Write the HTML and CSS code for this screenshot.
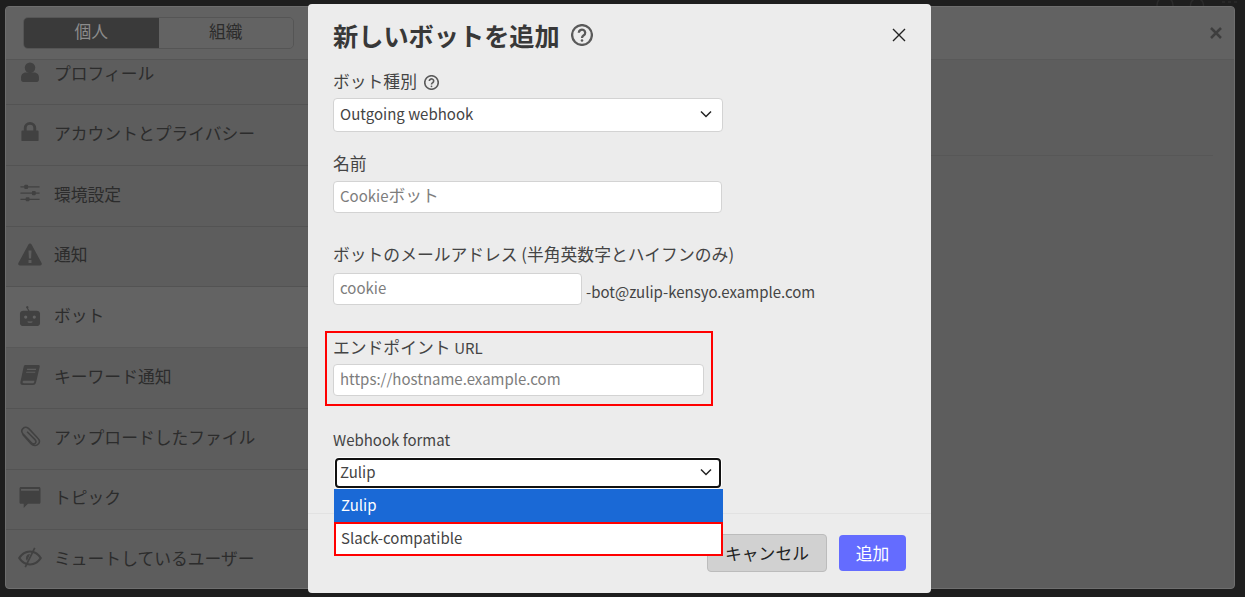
FILE: index.html
```html
<!DOCTYPE html>
<html lang="ja">
<head>
<meta charset="utf-8">
<title>新しいボットを追加</title>
<link rel="stylesheet" href="styles.css">
</head>
<body>
<div class="backdrop">
  <svg class="bd-icons" viewBox="0 0 90 12"><circle cx="9" cy="9" r="8"/><circle cx="41" cy="9" r="6.500"/><path d="M66 2h18M66 6h18" stroke-dasharray="3 3"/></svg>
</div>
<div class="settings">
  <aside class="sidebar">
    <div class="tabs-row">
      <div class="tabs"><span class="tab tab-on">個人</span><span class="tab">組織</span></div>
    </div>
    <ul class="menu">
      <li class="row row-first"><svg class="ico" viewBox="0 0 20 20"><circle cx="10" cy="5.500" r="5"/><path d="M1.500 17v-2.500C1.500 11.500 4 10 6 10h8c2 0 4.500 1.500 4.500 4.500V17c0 1-.8 2-2 2h-13c-1.200 0-2-1-2-2z"/></svg><span>プロフィール</span></li>
      <li class="row"><svg class="ico" viewBox="-1 0 22 22"><path fill-rule="evenodd" d="M2 9h1.500V6.500a6.500 6.500 0 0 1 13 0V9H18c.6 0 1 .4 1 1v9c0 .6-.4 1-1 1H2c-.6 0-1-.4-1-1v-9c0-.6.4-1 1-1zm4.500 0h7V6.500a3.500 3.500 0 0 0-7 0z"/></svg><span>アカウントとプライバシー</span></li>
      <li class="row"><svg class="ico" viewBox="-1 -1 24 22"><path d="M1 2.500h20v1.200H1zM1 9h20v1.200H1zM1 15.500h20v1.200H1z"/><rect x="5" y="0.800" width="4" height="4.400" rx="1"/><rect x="13" y="7.400" width="4" height="4.400" rx="1"/><rect x="6.500" y="13.800" width="4" height="4.400" rx="1"/></svg><span>環境設定</span></li>
      <li class="row"><svg class="ico ico-tall" viewBox="0 0 24 22"><path fill-rule="evenodd" d="M12 0c.7 0 1.200.4 1.600 1l10 18.500c.6 1.200-.2 2.500-1.500 2.500H1.900C.6 22-.2 20.700.4 19.500L10.400 1c.4-.6.900-1 1.600-1zM10.500 7l.4 8h2.200l.4-8zm0 9.500v3h3v-3z"/></svg><span>通知</span></li>
      <li class="row row-on"><svg class="ico" viewBox="0 0 22 22"><path fill-rule="evenodd" d="M8 1a1.400 1.400 0 0 1 1 2.400L10.500 6H18c2 0 3.500 1.300 3.500 3v10c0 1.700-1.500 3-3.500 3H4c-2 0-3.500-1.300-3.500-3V9c0-1.700 1.500-3 3.500-3h5L7.800 3.700A1.400 1.400 0 0 1 8 1zM6.500 11a1.700 1.700 0 1 0 0 3.400 1.700 1.700 0 0 0 0-3.400zm9 0a1.700 1.700 0 1 0 0 3.400 1.700 1.700 0 0 0 0-3.400zM8.500 17v1c1.500.7 3.500.7 5 0v-1c-1.500.5-3.500.5-5 0z"/></svg><span>ボット</span></li>
      <li class="row"><svg class="ico" viewBox="0 0 22 22"><path fill-rule="evenodd" d="M6 0h14c1 0 1.500.8 1.200 1.800l-3.500 15c-.6 2.500-1.200 4.200-3.700 4.200H3.500C1.500 21 .5 19.500 1 17.500L4.300 2C4.600.8 5 0 6 0zm2 4l-.3 1.200h9.500L17.500 4zm-.8 3l-.3 1.200h9.500l.3-1.200zM4.500 16.500c-1.500 0-1.800 2.600 0 2.600h9.700c.6 0 1-.6 1.200-1.300l.3-1.300z"/></svg><span>キーワード通知</span></li>
      <li class="row"><svg class="ico ico-clip" viewBox="0 0 22 22"><path d="M3 8.500 L12 18.500 C14.500 21 18 21 19.500 19 C21.500 17 21 14.500 19 12.500 L10 3 C8 .8 5.500 .8 3.800 2.500 C2 4.200 2 6.500 3.800 8.500 L12.500 17.500 C14 19 15.500 19 16.500 18 C17.500 17 17.500 15.500 16 14 L8 6"/></svg><span>アップロードしたファイル</span></li>
      <li class="row"><svg class="ico" viewBox="0 0 20 20"><path fill-rule="evenodd" d="M1.500 0h17C19.400 0 20 .6 20 1.500v13c0 .9-.6 1.500-1.500 1.500H8l-4 4v-4H1.500C.6 16 0 15.400 0 14.500v-13C0 .6.6 0 1.500 0zM1.500 2v1.600h17V2z"/></svg><span>トピック</span></li>
      <li class="row"><svg class="ico ico-tall" viewBox="0 0 24 22"><path fill-rule="evenodd" d="M12 3c5 0 9.500 3 12 7.500-2.500 4.500-7 7.500-12 7.500S2.500 15 0 10.500C2.500 6 7 3 12 3zm0 2C8.200 5 4.800 7.200 2.500 10.500 4.800 13.800 8.200 16 12 16s7.200-2.200 9.500-5.500C19.200 7.200 15.800 5 12 5z"/><path d="M16 0l1.500.8L8 20l-1.500-.8z"/><path d="M12 6.500a4 4 0 0 0-3 6.700z"/></svg><span>ミュートしているユーザー</span></li>
    </ul>
  </aside>
  <main class="pane">
    <header class="pane-head"><svg class="pane-close" viewBox="0 0 12 12"><path d="M1 1l10 10M11 1L1 11"/></svg></header>
    <div class="pane-body"><div class="pane-rule"></div></div>
  </main>
</div>

<section class="modal">
  <header class="modal-head">
    <h1>新しいボットを追加</h1>
    <svg class="help help-lg" viewBox="0 0 24 24"><circle cx="12" cy="12" r="10.800"/><path d="M8.500 9.500a3.500 3.300 0 1 1 5.400 2.800c-1.300.9-1.900 1.500-1.900 2.900"/><circle class="dot" cx="12" cy="18" r="1.400"/></svg>
    <svg class="close" viewBox="0 0 14 14"><path d="M1 1l12 12M13 1L1 13"/></svg>
  </header>

  <div class="field field-type">
    <label class="lbl">ボット種別 <svg class="help help-sm" viewBox="0 0 24 24"><circle cx="12" cy="12" r="10.800"/><path d="M8.500 9.500a3.500 3.300 0 1 1 5.400 2.800c-1.300.9-1.900 1.500-1.900 2.900"/><circle class="dot" cx="12" cy="18" r="1.400"/></svg></label>
    <div class="box select w390">Outgoing webhook<svg class="chev" viewBox="0 0 12 8"><path d="M1 1.500l5 5 5-5"/></svg></div>
  </div>

  <div class="field field-name">
    <label class="lbl">名前</label>
    <div class="box input w389">Cookie<span class="jp">ボット</span></div>
  </div>

  <div class="field field-mail">
    <label class="lbl">ボットのメールアドレス (半角英数字とハイフンのみ)</label>
    <div class="mail-row">
      <div class="box input w249">cookie</div>
      <span class="suffix">-bot@zulip-kensyo.example.com</span>
    </div>
  </div>

  <div class="field-url">
    <label class="lbl">エンドポイント <span class="latin">URL</span></label>
    <div class="box input w371">https://hostname.example.com</div>
  </div>

  <div class="field field-format">
    <label class="lbl lbl-small">Webhook format</label>
    <div class="box select focus">Zulip<svg class="chev" viewBox="0 0 12 8"><path d="M1 1.500l5 5 5-5"/></svg></div>
  </div>

  <footer class="modal-foot">
    <button class="btn btn-cancel">キャンセル</button>
    <button class="btn btn-add">追加</button>
  </footer>

  <ul class="dropdown">
    <li class="opt opt-on">Zulip</li>
    <li class="opt opt-mark">Slack-compatible</li>
  </ul>
</section>
</body>
</html>
```

FILE: styles.css
```css
* { box-sizing: border-box; }
html, body { height: 100%; }
body {
  margin: 0;
  height: 597px;
  overflow: hidden;
  background: #1e1e1e;
  font-family: "Noto Sans CJK JP", "Noto Sans", sans-serif;
  font-size: 16.8px;
  color: #333;
  padding: 6px 10px 8px 5px;
}
.backdrop {
  position: absolute;
  z-index: -1;
  left: 0;
  right: 0;
  top: 0;
  height: 6px;
  overflow: hidden;
}
.bd-icons {
  position: absolute;
  left: 1156px;
  top: -4px;
  width: 90px;
  height: 12px;
  fill: none;
  stroke: #2b2b2b;
  stroke-width: 1.500;
}
.settings {
  display: flex;
  height: 583px;
  background: #5d5d5d;
  border: 1px solid #6e6e6e;
  border-radius: 4px;
  overflow: hidden;
}
.sidebar { width: 320px; flex: none; }
.tabs-row {
  height: 53px;
  padding: 10px 32px 10px 17px;
  background: #626262;
  border-bottom: 1px solid #555;
}
.tabs {
  display: flex;
  height: 32px;
  border: 1px solid #555;
  border-radius: 5px;
  overflow: hidden;
}
.tab {
  flex: 1;
  text-align: center;
  line-height: 27px;
  color: #2b2b2b;
  background: #636363;
}
.tab-on { background: #3a3a3a; color: #8c8c8c; }
.menu { list-style: none; margin: 0; padding: 0; }
.row {
  display: flex;
  align-items: center;
  gap: 12px;
  height: 60.75px;
  padding: 0 0 4px 12px;
  border-bottom: 1px solid #535353;
  color: #2c2c2c;
  line-height: 24px;
}
.row-first { height: 45px; padding-bottom: 19px; }
.row-on { background: #636363; border-bottom-color: #585858; }
.ico { width: 24px; height: 21px; fill: #414141; flex: none; }
.ico-tall { height: 23px; }
.ico-clip { fill: none; stroke: #414141; stroke-width: 1.600; }
.pane { flex: 1; display: flex; flex-direction: column; }
.pane-head {
  height: 53px;
  background: #626262;
  border-bottom: 1px solid #595959;
  display: flex;
  justify-content: flex-end;
  align-items: center;
  padding-right: 12px;
}
.pane-close { width: 12px; height: 12px; fill: none; stroke: #3e3e3e; stroke-width: 2.500; }
.pane-body { flex: 1; padding: 95px 21px 0 0; }
.pane-rule { height: 1px; background: #575757; }

.modal {
  position: absolute;
  left: 308px;
  top: 4px;
  width: 623px;
  height: 589px;
  background: #ececec;
  border-radius: 4px;
  padding: 0 25px;
}
.modal-head {
  display: flex;
  align-items: center;
  height: 66px;
  padding-bottom: 4px;
}
.modal-head h1 {
  margin: 0;
  font-size: 25.200px;
  font-weight: 700;
  line-height: 36px;
  color: #383838;
}
.help { fill: none; stroke: #5a5a5a; stroke-width: 2.500; }
.help .dot { fill: #5a5a5a; stroke: none; }
.help-lg { width: 22px; height: 22px; margin-left: 11px; }
.help-sm { width: 15px; height: 15px; vertical-align: -2px; margin-left: 3px; stroke-width: 2.600; }
.close { width: 14px; height: 14px; margin-left: auto; fill: none; stroke: #222; stroke-width: 1.400; }
.lbl { display: block; height: 24px; line-height: 22px; color: #444; }
.lbl-small { font-size: 15px; line-height: 24px; }
.latin { font-size: 15px; }
.jp { font-size: 16.800px; }
.field-type .lbl { margin-bottom: 4px; }
.field-name { margin-top: 20px; }
.field-name .lbl { margin-bottom: 5px; }
.field-mail { margin-top: 30px; }
.field-mail .lbl { margin-bottom: 6px; }
.box {
  background: #fff;
  border: 1px solid #d3d3d3;
  border-radius: 4px;
  font-size: 15px;
  line-height: 24px;
  color: #444;
}
.input { height: 32px; padding: 2px 6px; color: #7d7d7d; }
.select {
  height: 34px;
  padding: 3px 6px 5px;
  display: flex;
  align-items: center;
  justify-content: space-between;
}
.chev { width: 12px; height: 8px; margin-right: 4px; fill: none; stroke: #222; stroke-width: 1.500; }
.w390 { width: 390px; }
.w389 { width: 389px; padding-top: 1px; padding-bottom: 3px; }
.w249 { width: 249px; }
.w371 { width: 371px; }
.mail-row { display: flex; align-items: flex-start; gap: 4px; }
.suffix { font-size: 15px; line-height: 24px; padding-top: 7px; color: #444; }
.field-url {
  width: 388px;
  height: 75px;
  margin: 26px 0 0 -8px;
  padding: 3px 6px 8px;
  border: 2px solid #f00;
}
.field-url .lbl { margin-bottom: 4px; }
.field-format { margin-top: 22px; }
.field-format .lbl { margin-bottom: 6px; }
.focus {
  width: 386px;
  height: 30px;
  margin-left: 2px;
  border: 2px solid #111;
  padding: 0 3px 2px;
  box-shadow: 0 0 0 1px #fff;
}
.modal-foot {
  position: absolute;
  left: 0;
  right: 0;
  bottom: 0;
  height: 80px;
  border-top: 1px solid #e2e2e2;
  display: flex;
  justify-content: flex-end;
  align-items: flex-start;
  gap: 12px;
  padding: 20px 25px 0;
}
.btn {
  font: inherit;
  border-radius: 4px;
  padding: 0;
}
.btn-cancel {
  width: 120px;
  height: 38px;
  background: #d1d1d1;
  border: 1px solid #bcbcbc;
  color: #222;
}
.btn-add {
  width: 67px;
  height: 36px;
  margin-top: 1px;
  background: #646cff;
  border: 0;
  color: #fff;
}
.dropdown {
  position: absolute;
  left: 26px;
  top: 485px;
  width: 389px;
  margin: 0;
  padding: 0;
  list-style: none;
  font-size: 15px;
}
.opt { height: 33px; line-height: 32px; padding: 0 7px; background: #fff; color: #444; }
.opt-on { background: #1a69d6; color: #fff; }
.opt-mark { height: 34px; line-height: 28px; border: 2px solid #f00; padding: 0 5px; }
```
